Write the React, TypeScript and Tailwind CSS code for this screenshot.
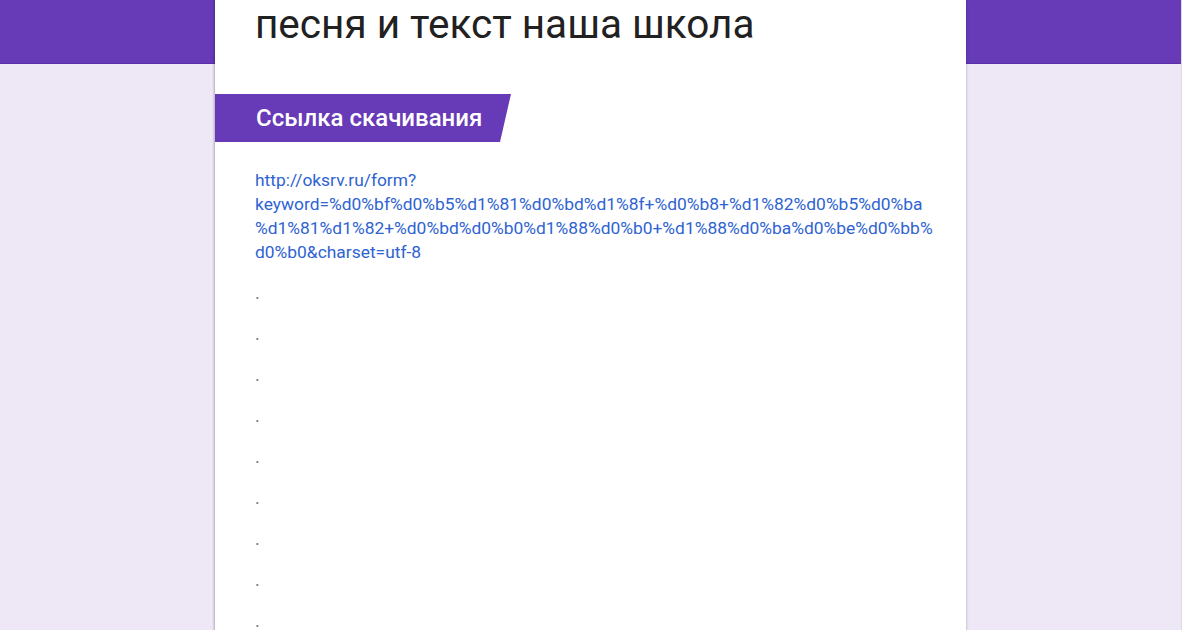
const TITLE = 'песня и текст наша школа';
// the link wraps the same way as in the reference
const LINK_LINES = [
  'http://oksrv.ru/form?',
  'keyword=%d0%bf%d0%b5%d1%81%d0%bd%d1%8f+%d0%b8+%d1%82%d0%b5%d0%ba',
  '%d1%81%d1%82+%d0%bd%d0%b0%d1%88%d0%b0+%d1%88%d0%ba%d0%be%d0%bb%',
  'd0%b0&charset=utf-8',
];

export default function App() {
  const dots = Array.from({ length: 9 });

  return (
    <div className="flex h-[630px] w-[1200px] overflow-hidden bg-white font-['Roboto',sans-serif]">
      {/* Page */}
      <div className="w-[1181px] shrink-0 bg-[#ede7f6]">
        <div className="h-16 border-b border-[#5a2fa8] bg-[#673ab7]" />

        {/* Form card */}
        <div className="mx-auto -mt-16 h-[700px] w-[751px] bg-white shadow-[0_1px_3px_rgba(0,0,0,0.25),-1px_0_2px_rgba(0,0,0,0.12)]">
          <h1 className="px-10 text-[40.5px] font-normal leading-[48px] text-[#212121]">
            {TITLE}
          </h1>

          {/* Section header */}
          <div className="mt-[46px] flex h-12 w-[296px] items-center bg-[#673ab7] pl-[41px] [clip-path:polygon(0_0,100%_0,calc(100%-11px)_100%,0_100%)]">
            <span className="text-[24px] font-medium text-white">Ссылка скачивания</span>
          </div>

          <div className="px-10 pt-[26px]">
            <a className="block text-[17.4px] leading-6 whitespace-nowrap text-[#2e63d3]">
              {LINK_LINES.map((line) => (
                <span key={line} className="block">
                  {line}
                </span>
              ))}
            </a>

            <div className="mt-[17px] flex flex-col gap-[17px]">
              {dots.map((_, i) => (
                <p key={i} className="text-[18px] leading-6 text-[#777]">
                  .
                </p>
              ))}
            </div>
          </div>
        </div>
      </div>
      <div className="flex-1 border-l border-[#ddd] bg-white" />
    </div>
  );
}
